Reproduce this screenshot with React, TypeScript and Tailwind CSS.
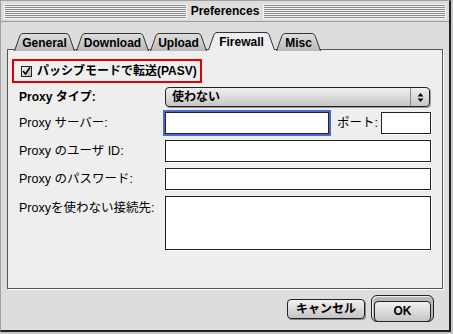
import React from 'react'

const tabs = [
  { name: 'General', w: 61 },
  { name: 'Download', w: 73 },
  { name: 'Upload', w: 57 },
  { name: 'Firewall', w: 67, active: true },
  { name: 'Misc', w: 45 },
]

function Tab({ name, w, active }: { name: string; w: number; active?: boolean }) {
  const d = `M0.5,18 L6,2.5 Q7,0.5 9,0.5 L${w - 9},0.5 Q${w - 7},0.5 ${w - 6},2.5 L${w - 0.5},18`
  return (
    <div
      className={`relative flex items-center justify-center ${active ? 'h-[18px] z-20' : 'h-[17px]'}`}
      style={{ width: w }}
    >
      <svg className="absolute inset-0" width={w} height={18} viewBox={`0 0 ${w} 18`}>
        <defs>
          <linearGradient id="tabg" x1="0" y1="0" x2="0" y2="1">
            <stop offset="0" stopColor="#dedede" />
            <stop offset="1" stopColor="#b9b9b9" />
          </linearGradient>
        </defs>
        <path d={d} fill={active ? '#eeeeee' : 'url(#tabg)'} stroke="#333" strokeWidth="1" />
      </svg>
      <span className="relative pt-[2px] text-[12px] font-bold leading-none text-black">{name}</span>
    </div>
  )
}

function Stripes() {
  return (
    <div className="h-[15px] flex-1 border border-[#f4f4f4] bg-[repeating-linear-gradient(#8a8a8a_0px,#8a8a8a_1px,#f2f2f2_1px,#f2f2f2_2px)]" />
  )
}

function Field({ w = 'w-[266px]', h = 'h-[22px]', focus }: { w?: string; h?: string; focus?: boolean }) {
  return (
    <div
      className={`${w} ${h} bg-white border border-[#222] ${
        focus ? 'outline-2 outline-[#4a6ad0]' : 'shadow-[1px_1px_0_#fff]'
      }`}
    />
  )
}

export default function App() {
  return (
    <div className="w-[453px] h-[334px] bg-[#c8c8c8] font-['Liberation_Sans','Noto_Sans_CJK_JP',sans-serif] text-black">
      <div className="w-[451px] h-[332px] bg-[#dddddd] border-l border-t border-[#a0a0a0] border-r-2 border-b-2 border-r-[#222] border-b-[#222] flex flex-col">
        {/* title bar */}
        <div className="h-[21px] flex items-center px-[3px] border-b border-[#9a9a9a] gap-[3px]">
          <Stripes />
          <span className="text-[12px] font-bold leading-none px-[1px]">Preferences</span>
          <Stripes />
        </div>

        <div className="flex-1 flex flex-col px-[6px] pt-[10px]">
          {/* tabs */}
          <div className="flex items-end gap-px pl-[7px] -mb-px relative z-10 h-[18px]">
            {tabs.map((t) => (
              <Tab key={t.name} {...t} />
            ))}
          </div>

          {/* panel */}
          <div className="h-[240px] bg-[#eeeeee] border border-[#555] shadow-[1px_1px_0_#fff] px-[4px] pt-[9px] relative">
            <div className="w-[190px] h-[24px] border-2 border-[#e00000] flex items-center pl-[7px] gap-[5px]">
              <div className="w-[11px] h-[11px] border border-[#222] bg-gradient-to-br from-[#f4f4f4] to-[#bdbdbd] flex items-center justify-center">
                <svg width="9" height="9" viewBox="0 0 9 9">
                  <path d="M1,4 L3.5,7 L8,0.5" fill="none" stroke="#000" strokeWidth="1.6" />
                </svg>
              </div>
              <span className="text-[12px] font-bold leading-none">パッシブモードで転送(PASV)</span>
            </div>

            <div className="flex flex-col pl-[7px] pr-[6px] mt-[4px]">
              <div className="flex items-center h-[20px]">
                <span className="w-[146px] text-[12px] font-bold">Proxy タイプ:</span>
                <div className="w-[265px] h-[20px] rounded-[4px] border border-[#222] bg-gradient-to-b from-[#f0f0f0] to-[#c6c6c6] shadow-[1px_1px_0_#999] flex">
                  <span className="flex-1 pl-[6px] text-[12px] font-bold leading-[18px]">使わない</span>
                  <div className="w-[19px] border-l border-[#888] flex items-center justify-center">
                    <svg width="7" height="11" viewBox="0 0 7 11">
                      <path d="M3.5,1 L6.5,4.5 L0.5,4.5 Z" fill="#000" />
                      <path d="M0.5,6.5 L6.5,6.5 L3.5,10 Z" fill="#000" />
                    </svg>
                  </div>
                </div>
              </div>

              <div className="flex items-center mt-[5px]">
                <span className="w-[146px] text-[12.5px]">Proxy サーバー:</span>
                <Field w="w-[164px]" focus />
                <span className="w-[52px] pl-[8px] text-[12.5px]">ポート:</span>
                <Field w="w-[50px]" />
              </div>

              <div className="flex items-center mt-[6px]">
                <span className="w-[146px] text-[12.5px]">Proxy のユーザ ID:</span>
                <Field />
              </div>

              <div className="flex items-center mt-[6px]">
                <span className="w-[146px] text-[12.5px]">Proxy のパスワード:</span>
                <Field />
              </div>

              <div className="flex items-start mt-[6px]">
                <span className="w-[146px] text-[12.5px] pt-[3px]">Proxyを使わない接続先:</span>
                <Field h="h-[54px]" />
              </div>
            </div>
          </div>

          {/* buttons */}
          <div className="flex-1 flex items-center justify-end pr-[9px] gap-[6px] pb-[2px]">
            <button className="w-[78px] h-[20px] rounded-[4px] border border-[#222] bg-gradient-to-b from-[#f2f2f2] to-[#c4c4c4] shadow-[1px_1px_0_#888] text-[12px] font-bold leading-none">
              キャンセル
            </button>
            <div className="w-[63px] h-[27px] rounded-[6px] border border-[#222] bg-[#b8b8b8] p-[2px] shadow-[inset_1px_1px_0_#eee]">
              <button className="w-full h-full rounded-[4px] border border-[#222] bg-gradient-to-b from-[#f2f2f2] to-[#c4c4c4] text-[12px] font-bold leading-none">
                OK
              </button>
            </div>
          </div>
        </div>
      </div>
    </div>
  )
}
